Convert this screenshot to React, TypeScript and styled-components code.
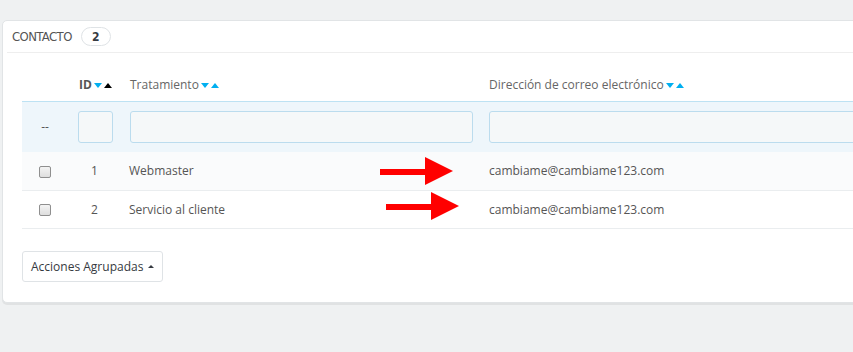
import React from "react";
import styled, { createGlobalStyle } from "styled-components";

const GlobalStyle = createGlobalStyle`
  html, body {
    margin: 0;
    padding: 0;
    background: #eff1f2;
    overflow: hidden;
  }
  body {
    font-family: "Open Sans", "Liberation Sans", sans-serif;
    font-size: 12px;
    color: #555;
  }
`;

const rows = [
  { id: 1, name: "Webmaster", email: "cambiame@cambiame123.com", arrowLeft: 251, arrowTop: -5 },
  { id: 2, name: "Servicio al cliente", email: "cambiame@cambiame123.com", arrowLeft: 257, arrowTop: -9 },
];

const Arrow = () => (
  <svg width="80" height="30" viewBox="0 0 80 30">
    <rect x="0" y="12" width="46" height="6" fill="#ff0000" />
    <polygon points="45,0 73,14 45,28" fill="#ff0000" />
  </svg>
);

const App = () => {
  return (
    <Page>
      <GlobalStyle />
      <Panel>
        <PanelHeading>
          <span>Contacto</span>
          <Badge>2</Badge>
        </PanelHeading>
        <PanelBody>
          <Table>
            <colgroup>
              <col style={{ width: 46 }} />
              <col style={{ width: 53 }} />
              <col style={{ width: 359 }} />
              <col />
            </colgroup>
            <thead>
              <HeadRow>
                <th />
                <HeadCell $pad={11} $strong>
                  ID
                  <SortIcons>
                    <Caret $dir="down" />
                    <Caret $dir="up" $active />
                  </SortIcons>
                </HeadCell>
                <HeadCell $pad={9}>
                  Tratamiento
                  <SortIcons>
                    <Caret $dir="down" />
                    <Caret $dir="up" />
                  </SortIcons>
                </HeadCell>
                <HeadCell $pad={9}>
                  Dirección de correo electrónico
                  <SortIcons>
                    <Caret $dir="down" />
                    <Caret $dir="up" />
                  </SortIcons>
                </HeadCell>
              </HeadRow>
              <FilterRow>
                <FilterCell $center>--</FilterCell>
                <FilterCell $pad={10} $right={8}>
                  <FilterInput />
                </FilterCell>
                <FilterCell $pad={9} $right={7}>
                  <FilterInput />
                </FilterCell>
                <FilterCell $pad={9} $right={0}>
                  <FilterInput />
                </FilterCell>
              </FilterRow>
            </thead>
            <tbody>
              {rows.map((row, i) => (
                <DataRow key={row.id} $odd={i % 2 === 0}>
                  <Cell $center>
                    <Check />
                  </Cell>
                  <Cell $center>{row.id}</Cell>
                  <Cell $pad={8}>
                    <NameWrap>
                      {row.name}
                      <ArrowSpot $left={row.arrowLeft} $top={row.arrowTop}>
                        <Arrow />
                      </ArrowSpot>
                    </NameWrap>
                  </Cell>
                  <Cell $pad={9}>{row.email}</Cell>
                </DataRow>
              ))}
            </tbody>
          </Table>
          <Footer>
            <BulkButton>
              Acciones Agrupadas <UpCaret />
            </BulkButton>
          </Footer>
        </PanelBody>
      </Panel>
    </Page>
  );
};

const Page = styled.div`
  padding: 20px 0 0 2px;
  height: 352px;
  box-sizing: border-box;
`;

const Panel = styled.div`
  width: 940px;
  background: #fff;
  border: 1px solid #e1e4e6;
  border-radius: 5px;
  box-shadow: 0 2px 0 rgba(0, 0, 0, 0.06);
  box-sizing: border-box;
`;

const PanelHeading = styled.div`
  display: flex;
  align-items: center;
  gap: 9px;
  height: 31px;
  margin: 0 0 0 4px;
  padding: 0 0 0 5px;
  border-bottom: 1px solid #eeeeee;
  font-family: "DejaVu Sans Condensed", "DejaVu Sans", sans-serif;
  font-stretch: condensed;
  font-size: 13px;
  letter-spacing: -0.6px;
  text-transform: uppercase;
  color: #555;
`;

const Badge = styled.span`
  display: inline-flex;
  align-items: center;
  justify-content: center;
  width: 30px;
  height: 19px;
  box-sizing: border-box;
  border: 1px solid #dfe3e6;
  border-radius: 10px;
  font-weight: bold;
  font-size: 12px;
  letter-spacing: 0;
  color: #363a41;
`;

const PanelBody = styled.div`
  padding: 15px 0 20px 19px;
`;

const Table = styled.table`
  width: 920px;
  border-collapse: collapse;
  table-layout: fixed;
`;

const HeadRow = styled.tr`
  height: 33px;
`;

const HeadCell = styled.th<{ $pad: number; $strong?: boolean }>`
  text-align: left;
  padding: 1px 0 0 ${(p) => p.$pad}px;
  font-weight: ${(p) => (p.$strong ? 700 : 400)};
  color: ${(p) => (p.$strong ? "#555" : "#666")};
  font-size: 12px;
  white-space: nowrap;
  vertical-align: middle;
`;

const SortIcons = styled.span`
  display: inline-flex;
  gap: 2px;
  margin-left: 2px;
  vertical-align: middle;
  position: relative;
  top: -1px;
`;

const Caret = styled.span<{ $dir: "up" | "down"; $active?: boolean }>`
  width: 0;
  height: 0;
  border-left: 4px solid transparent;
  border-right: 4px solid transparent;
  ${(p) =>
    p.$dir === "down"
      ? `border-top: 5px solid #00aff0;`
      : `border-bottom: 5px solid ${p.$active ? "#000" : "#00aff0"};`}
`;

const FilterRow = styled.tr`
  height: 51px;
  background: #eef6fb;
  border-top: 1px solid #bde2f3;
`;

const FilterCell = styled.td<{ $pad?: number; $right?: number; $center?: boolean }>`
  padding: 0 ${(p) => p.$right ?? 0}px 0 ${(p) => p.$pad ?? 0}px;
  text-align: ${(p) => (p.$center ? "center" : "left")};
  vertical-align: middle;
  color: #555;
`;

const FilterInput = styled.input`
  display: block;
  width: 100%;
  height: 32px;
  box-sizing: border-box;
  border: 1px solid #bbdcee;
  border-radius: 3px;
  background: #f5f8f9;
`;

const DataRow = styled.tr<{ $odd: boolean }>`
  height: 38px;
  background: ${(p) => (p.$odd ? "#fafbfc" : "#fff")};
  border-bottom: 1px solid #eaedef;
`;

const Cell = styled.td<{ $pad?: number; $center?: boolean }>`
  padding: 0 0 0 ${(p) => p.$pad ?? 0}px;
  text-align: ${(p) => (p.$center ? "center" : "left")};
  vertical-align: middle;
  color: #555;
`;

const NameWrap = styled.div`
  position: relative;
`;

const ArrowSpot = styled.div<{ $left: number; $top: number }>`
  position: absolute;
  left: ${(p) => p.$left}px;
  top: ${(p) => p.$top}px;
  line-height: 0;
`;

const Check = styled.span`
  display: inline-block;
  width: 12px;
  height: 12px;
  box-sizing: border-box;
  border: 1px solid #8f8f8f;
  border-radius: 2px;
  background: linear-gradient(#f4f4f4, #dedede);
  vertical-align: middle;
  margin-left: 0;
`;

const Footer = styled.div`
  padding-top: 22px;
`;

const BulkButton = styled.button`
  display: inline-flex;
  align-items: center;
  gap: 5px;
  height: 31px;
  padding: 0 8px 0 8px;
  border: 1px solid #dfe3e6;
  border-radius: 3px;
  background: #fff;
  font-family: "Open Sans", "Liberation Sans", sans-serif;
  font-size: 12px;
  color: #363a41;
  box-sizing: border-box;
`;

const UpCaret = styled.span`
  width: 0;
  height: 0;
  border-left: 3px solid transparent;
  border-right: 3px solid transparent;
  border-bottom: 3px solid #363a41;
`;

export default App;
